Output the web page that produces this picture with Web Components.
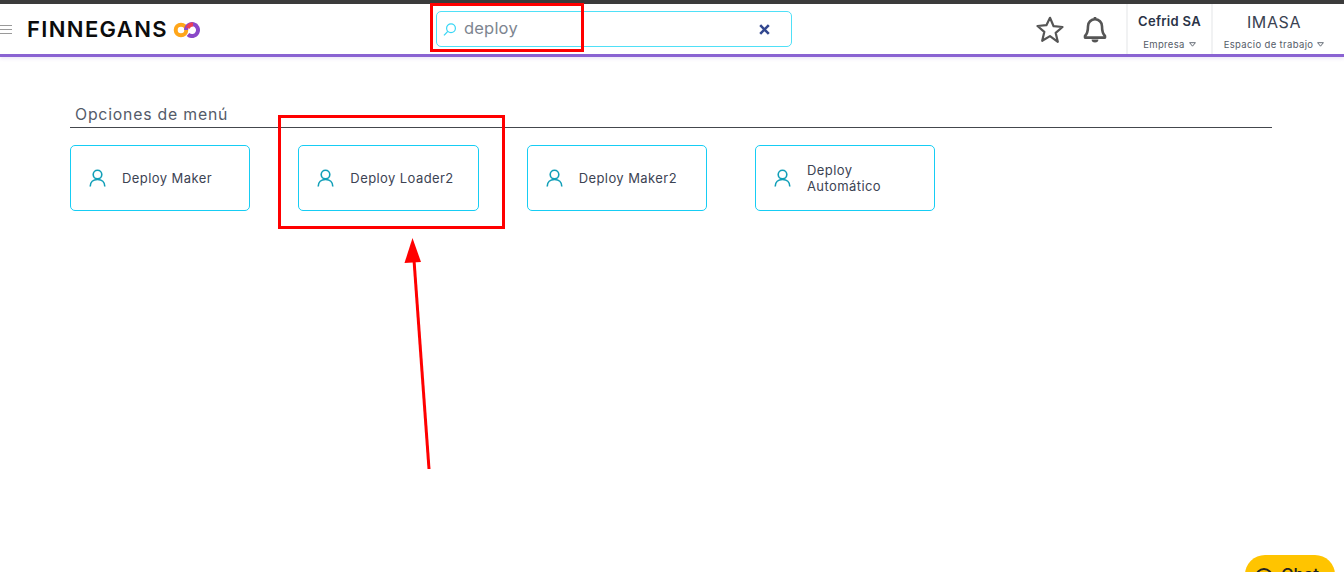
<!DOCTYPE html>
<html lang="es"><head><meta charset="utf-8"><title>Finnegans</title>
<style>
html,body{margin:0;height:572px;overflow:hidden;background:#fff;font-family:Inter,"Open Sans",sans-serif;}
body{position:relative}
</style></head><body>
<app-header></app-header>
<menu-section title-text="Opciones de menú">
<menu-card>Deploy Maker</menu-card>
<menu-card>Deploy Loader2</menu-card>
<menu-card>Deploy Maker2</menu-card>
<menu-card>Deploy Automático</menu-card>
</menu-section>
<annotation-layer></annotation-layer>
<chat-button></chat-button>
<script>
function def(name,html){customElements.define(name,class extends HTMLElement{constructor(){super();this.attachShadow({mode:'open'}).innerHTML=html;}connectedCallback(){const t=this.shadowRoot.querySelector('[data-title]');if(t)t.textContent=this.getAttribute('title-text')||'';for(const a of ['main','sub']){const e=this.shadowRoot.querySelector('[data-'+a+']');if(e)e.textContent=this.getAttribute(a)||'';}}});}
def('org-picker',`<style>
:host{display:flex;flex-direction:column;align-items:center;box-sizing:border-box;height:50px;border-left:2px solid #f1f2f3;color:#2a3347}
.m{height:35px;line-height:35px;white-space:nowrap}
.s{font-size:9.5px;color:#555c68;white-space:nowrap;display:flex;align-items:center;gap:4px;line-height:11px;letter-spacing:.35px}
svg{display:block}
:host([kind=a]){width:85px;}
:host([kind=a]) .m{font-size:13px;font-weight:600;letter-spacing:.3px}
:host([kind=b]){width:133px;padding-right:9px}
:host([kind=b]) .m{font-size:16px;font-weight:400;color:#3a4252;letter-spacing:.6px;line-height:37px}
</style><div class="m" data-main></div><div class="s"><span data-sub></span><svg width="7" height="5" viewBox="0 0 7 5"><path d="M.6.7h5.8L3.5 4.2z" fill="none" stroke="#555c68" stroke-width=".9"/></svg></div>`);
def('app-header',`<style>
:host{display:flex;align-items:stretch;box-sizing:border-box;height:57px;border-top:4px solid #3b3b3b;border-bottom:3px solid #8a63d2;box-shadow:0 2px 3px rgba(138,99,210,.15);background:#fff;position:relative}
.left{width:436px;display:flex;align-items:center;flex:none}
.burger{width:12px;display:flex;flex-direction:column;gap:3px;margin-top:1px}
.burger i{display:block;height:1px;background:#9a9a9a}
.logo{margin-left:15px;font:600 22px Inter,sans-serif;letter-spacing:1.37px;color:#0c0c0c;white-space:nowrap}
.mark{margin-left:5px;display:block;margin-top:1px}
.search{width:356px;height:36px;box-sizing:border-box;margin-top:7px;border:1px solid #4fe0f7;border-radius:5px;display:flex;align-items:center;padding-left:6px;flex:none}
.search span{margin-left:7px;font-size:16.5px;color:#7d8590;letter-spacing:.2px;flex:1;margin-top:-2px}
.x{margin-right:21px;display:block}
.sp{flex:1}
.icons{display:flex;align-items:center;gap:19px;margin-right:19px;padding-top:1px}
svg{display:block}
</style>
<div class="left"><div class="burger"><i></i><i></i><i></i></div><div class="logo">FINNEGANS</div>
<svg class="mark" width="28" height="16" viewBox="0 0 28 16"><circle cx="8" cy="8" r="5.3" fill="none" stroke="#ffa61a" stroke-width="4"/><path d="M13 8a6 6 0 1 1 2 4.5" fill="none" stroke="#8a48c8" stroke-width="4"/><path d="M20 2.6a5.4 5.4 0 0 0-5.2 3.6" fill="none" stroke="#ee3f55" stroke-width="4"/></svg></div>
<div class="search"><svg width="14" height="15" viewBox="0 0 14 15"><circle cx="8" cy="6.2" r="4.4" fill="none" stroke="#37d6f5" stroke-width="1.2"/><path d="M4.8 9.4 1 13.4" stroke="#37d6f5" stroke-width="1.3" fill="none"/></svg><span>deploy</span>
<svg class="x" width="11" height="11" viewBox="0 0 11 11"><path d="M1.2 1.2l8.6 8.6M9.8 1.2l-8.6 8.6" stroke="#32478f" stroke-width="2.6"/></svg></div>
<div class="sp"></div>
<div class="icons"><svg width="28" height="27" viewBox="0 0 28 27"><path d="M14 1.8l3.6 8.4 8.9.8-6.8 5.9 2.1 8.9L14 20.1l-7.8 4.7 2.1-8.9-6.8-5.9 8.9-.8z" fill="none" stroke="#555" stroke-width="2.2" stroke-linejoin="round"/></svg>
<svg width="24" height="27" viewBox="0 0 24 27"><path d="M12 3.2a7 7 0 0 0-7 7c0 5.6-1 7.8-3 9.8v1.6h20V20c-2-2-3-4.2-3-9.8a7 7 0 0 0-7-7z" fill="none" stroke="#555" stroke-width="2.6" stroke-linejoin="round"/><path d="M12 1v2.5" stroke="#555" stroke-width="2.6"/><path d="M8.6 23.6a3.4 3 0 0 0 6.8 0z" fill="#555"/></svg></div>
<org-picker kind="a" main="Cefrid SA" sub="Empresa"></org-picker>
<org-picker kind="b" main="IMASA" sub="Espacio de trabajo"></org-picker>`);
def('menu-section',`<style>
:host{display:block;box-sizing:border-box;margin:0 72px 0 70px;padding-top:44px}
h2{margin:0;box-sizing:border-box;height:27px;padding:3px 0 0 5px;border-bottom:1px solid #44474d;font:400 15.8px/22px Inter,sans-serif;color:#545b69;letter-spacing:.8px}
.g{display:grid;grid-template-columns:repeat(4,180.33px);column-gap:48px;margin-top:17px}
</style><h2 data-title></h2><div class="g"><slot></slot></div>`);
def('menu-card',`<style>
:host{display:flex;align-items:center;box-sizing:border-box;height:66px;border:1px solid #16cdf4;border-radius:5px;padding-left:18px;font-size:13px;line-height:16px;color:#3c4353;letter-spacing:.42px}
svg{flex:none;display:block}
.t{margin-left:16px;max-width:110px}
</style><svg width="17" height="18" viewBox="0 0 17 18"><circle cx="8.5" cy="5.6" r="4.3" fill="none" stroke="#119fb8" stroke-width="1.6"/><path d="M1.2 17.5c0-4.4 3-7 7.3-7s7.3 2.6 7.3 7" fill="none" stroke="#119fb8" stroke-width="1.6"/></svg><div class="t"><slot></slot></div>`);
def('annotation-layer',`<style>
:host{position:absolute;inset:0;display:block;pointer-events:none}
.b{position:absolute;box-sizing:border-box;border:3px solid #f00}
svg{position:absolute;left:400px;top:235px}
</style><div class="b" style="left:430px;top:3px;width:154px;height:49px"></div>
<div class="b" style="left:278px;top:115px;width:227px;height:114px"></div>
<svg width="32" height="236" viewBox="0 0 32 236"><path d="M29 234 L14 25" stroke="#f00" stroke-width="3" fill="none"/><path d="M12.5 3 L4.500 28 L21 27z" fill="#f00"/></svg>`);
def('chat-button',`<style>
:host{position:absolute;left:1245px;top:555px;width:90px;height:40px;box-sizing:border-box;background:#ffc400;border-radius:20px;display:flex;align-items:flex-start;padding:10px 0 0 9px;gap:7px;font:500 17px/20px Inter,sans-serif;color:#222}
svg{display:block;margin-top:2px}
</style><svg width="20" height="20" viewBox="0 0 20 20"><circle cx="10" cy="10" r="8" fill="none" stroke="#222" stroke-width="2"/></svg><span>Chat</span>`);
</script>
</body></html>
